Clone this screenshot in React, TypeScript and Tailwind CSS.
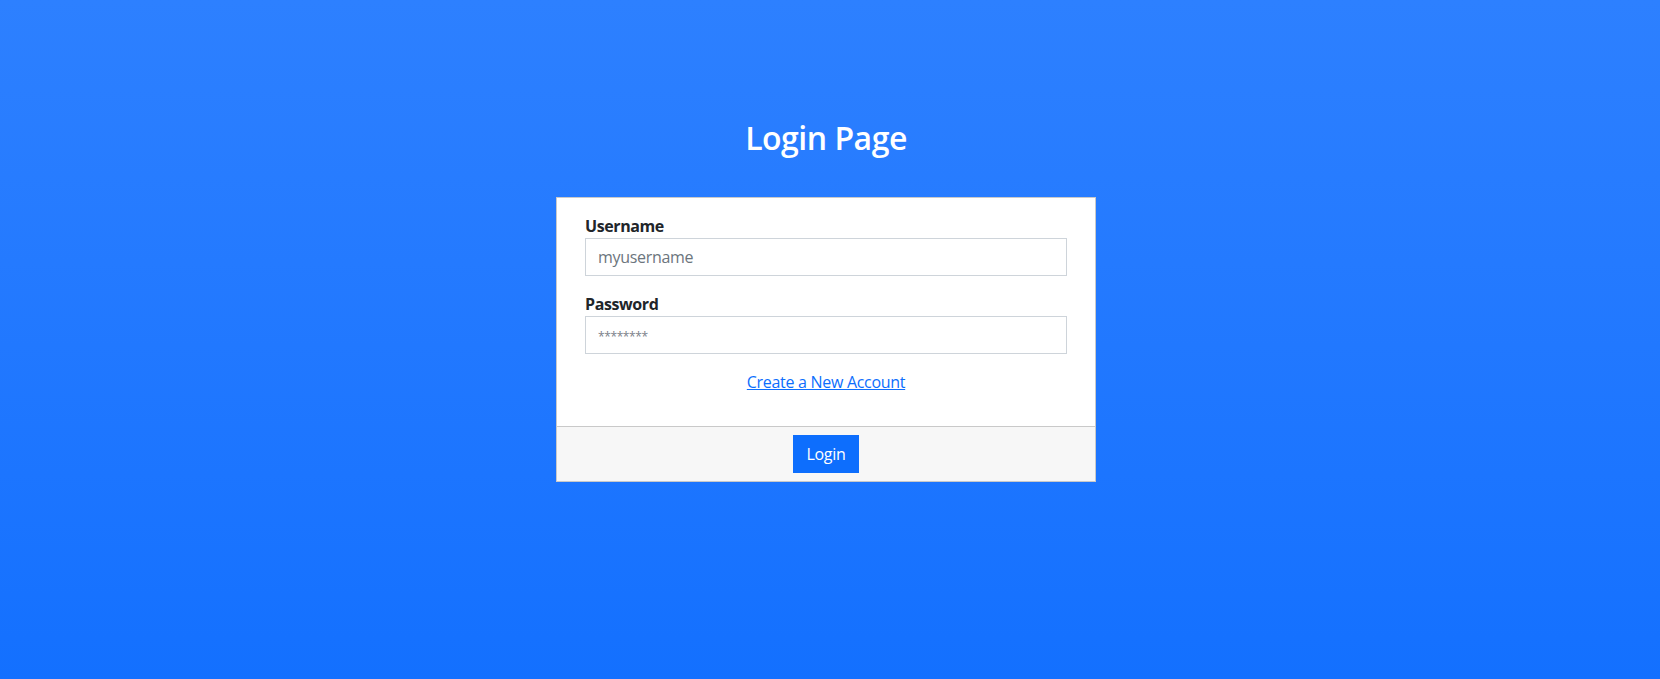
import React from "react";

export default function App() {
  return (
    <div
      className="min-h-[679px] w-full bg-gradient-to-b from-[#2d80ff] to-[#1370ff] pr-[8px]"
      style={{ fontFamily: '"Open Sans", "Noto Sans", sans-serif' }}
    >
      <div className="flex flex-col items-center pt-[119px]">
        <h1 className="text-[32px] leading-[38px] font-semibold text-white mb-[40px] tracking-[-0.5px]">
          Login Page
        </h1>
        <div className="w-[540px] bg-white border border-[#c9c9c9]">
          <div className="px-[28px] pt-[16px] pb-[32px]">
            <label className="block text-[16px] leading-[24px] font-bold text-[#212529] tracking-[-0.4px]">
              Username
            </label>
            <input
              type="text"
              placeholder="myusername"
              className="block w-full h-[38px] border border-[#ced4da] px-[12px] text-[16px] leading-[24px] text-[#212529] placeholder:text-[#6c757d] outline-none tracking-[-0.3px]"
            />
            <label className="block mt-[16px] text-[16px] leading-[24px] font-bold text-[#212529] tracking-[-0.4px]">
              Password
            </label>
            <input
              type="password"
              placeholder="********"
              className="block w-full h-[38px] border border-[#ced4da] px-[12px] text-[16px] leading-[24px] text-[#212529] placeholder:text-[#7a8088] placeholder:text-[12px] outline-none tracking-[-0.4px]"
            />
            <div className="mt-[16px] text-center text-[16px] leading-[24px]">
              <a href="#" className="text-[#0d6efd] underline tracking-[-0.3px]">
                Create a New Account
              </a>
            </div>
          </div>
          <div className="flex justify-center border-t border-[#c9c9c9] bg-[#f7f7f7] py-[8px]">
            <button className="h-[38px] bg-[#0d6efd] px-[12px] text-[16px] leading-[24px] text-white border border-[#0d6efd] tracking-[-0.3px]">
              Login
            </button>
          </div>
        </div>
      </div>
    </div>
  );
}
